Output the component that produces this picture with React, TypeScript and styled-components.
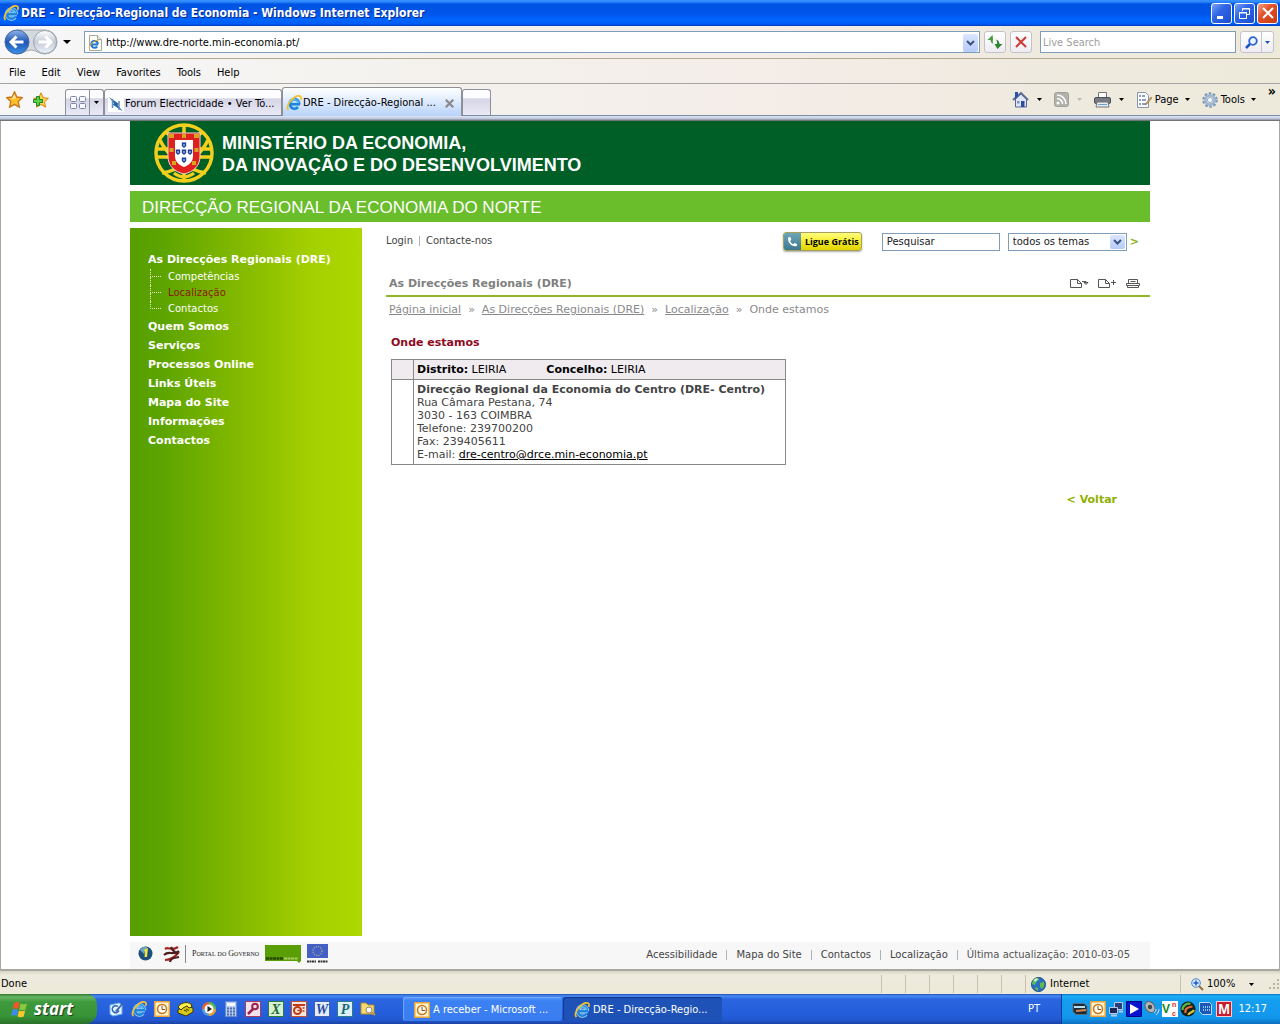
import React from 'react';
import styled, { createGlobalStyle } from 'styled-components';

const ui = '"DejaVu Sans Condensed", Tahoma, sans-serif';
const web = '"DejaVu Sans", Verdana, sans-serif';

const GlobalStyle = createGlobalStyle`
  *, *::before, *::after { box-sizing: border-box; }
  body { margin: 0; background: #fff; font: 11px/14px ${ui}; color: #000; }
  button, input, select { font: inherit; color: inherit; margin: 0; }
  button { padding: 0; border: 0; background: none; white-space: nowrap; }
  ul { list-style: none; margin: 0; padding: 0; }
  h1, h2, h3, p { margin: 0; }
  svg { display: block; flex: none; }
`;

/* ---------- browser window ---------- */

const Window = styled.div`
  min-height: 100vh;
  display: flex;
  flex-direction: column;
`;

const TitleBar = styled.header`
  height: 26px;
  display: flex;
  align-items: center;
  gap: 2px;
  padding: 0 2px 0 3px;
  background: linear-gradient(#3a93ff 0, #2a86ff 2px, #0053e1 4px, #0055ea 14px, #0066ff 20px, #005cf4 24px, #0038c0 26px);
`;

const WindowTitle = styled.h1`
  flex: 1;
  font: bold 12px/16px ${ui};
  color: #fff;
  text-shadow: 1px 1px 0 #0a2a8c;
  white-space: nowrap;
`;

const CaptionButton = styled.button<{ $close?: boolean }>`
  width: 21px;
  height: 21px;
  display: grid;
  place-items: center;
  border: 1px solid #fff;
  border-radius: 3px;
  background: ${p => p.$close
    ? 'linear-gradient(135deg, #f0a080, #e2512a 40%, #c93a10)'
    : 'linear-gradient(135deg, #7ba2f5, #2f66e6 40%, #1d4cd0)'};
`;

const Chrome = styled.div`
  background: linear-gradient(90deg, #f7f7f9, #f4f2ee 30%, #f4ede8 60%, #efeadf 80%, #edeadb);
`;

const NavBar = styled.div`
  height: 33px;
  display: flex;
  align-items: center;
  padding: 0 6px 0 4px;
  border-bottom: 1px solid #b5a98c;
`;

const BackForward = styled.div`
  display: flex;
  align-items: center;
  width: 80px;
  gap: 5px;
`;

const AddressBox = styled.form`
  flex: 1;
  height: 22px;
  display: flex;
  align-items: center;
  gap: 2px;
  padding: 1px 1px 0 2px;
  border: 1px solid #7f9db9;
  background: #fff;
`;

const BareInput = styled.input`
  flex: 1;
  min-width: 0;
  border: 0;
  padding: 1px 1px 0;
  background: transparent;
  outline: none;
  &::placeholder { color: #a0a0a0; opacity: 1; }
`;

const DropButton = styled.button`
  width: 15px;
  height: 18px;
  display: grid;
  place-items: center;
  border-radius: 2px;
  background: linear-gradient(#dbe5fd, #b5cbf9);
`;

const ToolButton = styled.button`
  width: 22px;
  height: 22px;
  margin-left: 4px;
  display: grid;
  place-items: center;
  border: 1px solid #c3c2cb;
  border-radius: 3px;
  background: linear-gradient(#fff, #eeecf2);
`;

const SearchBox = styled.form`
  width: 196px;
  height: 22px;
  margin: 0 4px 0 8px;
  display: flex;
  align-items: center;
  padding: 1px 1px 0;
  border: 1px solid #7f9db9;
  background: #fff;
`;

const SplitButton = styled.div`
  height: 22px;
  display: flex;
  border: 1px solid #c3c2cb;
  border-radius: 3px;
  background: linear-gradient(#fff, #eeecf2);
`;

const SplitPart = styled.button<{ $narrow?: boolean }>`
  width: ${p => (p.$narrow ? 12 : 20)}px;
  display: grid;
  place-items: center;
  border-left: ${p => (p.$narrow ? '1px solid #c3c2cb' : '0')};
`;

const MenuBar = styled.nav`
  height: 25px;
  display: flex;
  align-items: center;
  gap: 16px;
  padding: 3px 9px 0;
  border-bottom: 1px solid #a7a6a0;
`;

const TabRow = styled.div`
  height: 32px;
  display: flex;
  align-items: flex-end;
  padding: 0 2px 0 6px;
  border-bottom: 1px solid #7a8ca8;
`;

const Favourites = styled.div`
  height: 31px;
  width: 59px;
  display: flex;
  align-items: center;
  gap: 10px;
`;

const TabFrame = styled.div<{ $active?: boolean; $width: number }>`
  width: ${p => p.$width}px;
  height: ${p => (p.$active ? 29 : 26)}px;
  margin-bottom: ${p => (p.$active ? -1 : 0)}px;
  display: flex;
  align-items: center;
  gap: 1px;
  padding: 2px 7px 0 3px;
  border: 1px solid #8e9097;
  border-bottom: 0;
  border-radius: 3px 3px 0 0;
  background: ${p => p.$active
    ? 'linear-gradient(#fff, #e3eefe 40%, #b9d3fb)'
    : 'linear-gradient(#fdfdff 30%, #d5d5e6 36%, #eaeaf6)'};
`;

const TabLabel = styled.button`
  flex: 1;
  text-align: left;
`;

const QuickTabs = styled(TabFrame)`
  padding: 0;
  gap: 0;
`;

const QuickPart = styled.button<{ $narrow?: boolean }>`
  flex: ${p => (p.$narrow ? '0 0 14px' : 1)};
  height: 100%;
  display: grid;
  place-items: center;
  border-left: ${p => (p.$narrow ? '1px solid #8e9097' : '0')};
`;

const CommandBar = styled.div`
  flex: 1;
  height: 31px;
  display: flex;
  align-items: center;
  justify-content: flex-end;
  gap: 12px;
  padding-right: 2px;
`;

const Command = styled.button<{ $label?: boolean }>`
  display: flex;
  align-items: center;
  gap: ${p => (p.$label ? 3 : 8)}px;
`;

const Overflow = styled.button`
  align-self: flex-start;
  font: bold 14px/14px ${ui};
`;

const ViewportEdge = styled.div`
  height: 5px;
  background: linear-gradient(#dfe6f2, #b9c3da 3px, #7d8087 4px, #6b6b6b);
`;

/* ---------- web page ---------- */

const Viewport = styled.div`
  flex: 1;
  display: flex;
  border: solid #a9a89f;
  border-width: 0 1px 2px;
  background: #fff;
  font: 11px/13px ${web};
`;

const Site = styled.div`
  flex: 1;
  max-width: 1020px;
  margin: 0 auto;
  display: flex;
  flex-direction: column;
  gap: 6px;
`;

const Ministry = styled.header`
  height: 64px;
  display: flex;
  align-items: center;
  gap: 8px;
  padding-left: 24px;
  background: #005e27;
  color: #fff;
  font: bold 18px/22px "Liberation Sans", Arial, sans-serif;
`;

const MinistryName = styled.div`
  padding-top: 2px;
`;

const Region = styled.h2`
  height: 31px;
  padding: 1px 12px 0;
  background: #6abd2b;
  color: #fff;
  font: 17px/32px "Liberation Sans", Arial, sans-serif;
`;

const Columns = styled.div`
  flex: 1;
  display: flex;
  gap: 24px;
`;

const Sidebar = styled.nav`
  width: 232px;
  padding: 22px 18px;
  background: linear-gradient(90deg, #569f00, #5ba300 12%, #86bb00 50%, #a5d000 78%, #aed800);
  color: #fff;
`;

const MainLink = styled.a`
  color: #fff;
  font-weight: bold;
  line-height: 19px;
  text-decoration: none;
`;

const Branch = styled.li<{ $last?: boolean }>`
  height: 16px;
  margin-left: 2px;
  display: grid;
  grid-template: 8px 8px / 11px auto;
  column-gap: 7px;
  font-size: 10px;
  line-height: 16px;
  &::before {
    content: '';
    border: dotted #e4f0c0;
    border-width: 0 0 1px 1px;
  }
  &::after {
    content: '';
    grid-row: 2;
    grid-column: 1;
    border-left: ${p => (p.$last ? '0' : '1px dotted #e4f0c0')};
  }
`;

const SubLink = styled.a<{ $current?: boolean }>`
  grid-column: 2;
  grid-row: 1 / 3;
  color: ${p => (p.$current ? '#8c1a00' : '#fff')};
  text-decoration: none;
`;

const Main = styled.main`
  flex: 1;
  min-width: 0;
  color: #444;
`;

const TopRow = styled.div`
  height: 27px;
  display: flex;
  align-items: center;
  padding-right: 11px;
  font-size: 10px;
`;

const Account = styled.div`
  flex: 1;
  display: flex;
  gap: 6px;
  align-items: center;
  padding-bottom: 2px;
`;

const PlainLink = styled.a`
  color: #444;
  text-decoration: none;
`;

const Rule = styled.span<{ $tall?: boolean }>`
  width: 1px;
  height: ${p => (p.$tall ? 18 : 10)}px;
  background: ${p => (p.$tall ? '#888' : '#a8b4b8')};
`;

const CallButton = styled.button`
  height: 19px;
  display: flex;
  align-items: center;
  margin-right: 20px;
  border: 1px solid #a5a15a;
  border-radius: 3px;
  overflow: hidden;
  background: linear-gradient(#fffd80, #f4ec2c 50%, #e2d400);
  box-shadow: 0 1px 2px #aaa;
  color: #000;
  font: bold 9px/17px "Open Sans", sans-serif;
`;

const CallIcon = styled.span`
  width: 17px;
  height: 17px;
  margin-right: 2px;
  display: grid;
  place-items: center;
  background: linear-gradient(#6fa5b8, #3d7890);
`;

const CallText = styled.span`
  width: 58px;
  text-align: center;
`;

const SearchField = styled.input`
  width: 118px;
  height: 18px;
  padding: 0 4px;
  border: 1px solid #7f9db9;
  background: #fff;
  &::placeholder { color: #222; opacity: 1; }
`;

const SelectFrame = styled.div`
  width: 119px;
  height: 18px;
  margin: 0 3px 0 8px;
  display: grid;
  grid-template-columns: 1fr 15px;
  align-items: center;
  padding-right: 1px;
  border: 1px solid #7f9db9;
`;

const ThemeSelect = styled.select`
  grid-area: 1 / 1 / 2 / 3;
  height: 16px;
  padding: 0 4px;
  appearance: none;
  border: 0;
  background: transparent;
  color: #222;
`;

const SelectArrow = styled.span`
  grid-area: 1 / 2;
  height: 14px;
  display: grid;
  place-items: center;
  border-radius: 2px;
  background: linear-gradient(#dbe5fd, #b5cbf9);
  pointer-events: none;
`;

const Go = styled.button`
  color: #8fb31a;
  font: bold 11px/14px ${web};
`;

const SectionHead = styled.div`
  height: 42px;
  display: flex;
  align-items: flex-end;
  padding: 0 10px 5px 3px;
  border-bottom: 2px solid #93b32b;
`;

const SectionTitle = styled.h2`
  flex: 1;
  font: bold 11px/13px ${web};
  color: #808080;
`;

const PageTools = styled.div`
  display: flex;
  gap: 9px;
  padding-bottom: 1px;
`;

const Crumbs = styled.nav`
  display: flex;
  gap: 7px;
  padding: 6px 3px;
  color: #8a8a8a;
`;

const CrumbLink = styled.a`
  color: #8a8a8a;
`;

const Article = styled.section`
  padding: 14px 33px 0 5px;
`;

const ArticleTitle = styled.h3`
  font: bold 11px/13px ${web};
  color: #8e0b1e;
`;

const OfficeTable = styled.table`
  width: 395px;
  margin-top: 10px;
  border-collapse: collapse;
`;

const Row = styled.tr<{ $shaded?: boolean }>`
  background: ${p => (p.$shaded ? '#efebef' : '#fff')};
  color: ${p => (p.$shaded ? '#000' : '#444')};
`;

const Cell = styled.td<{ $width?: number }>`
  width: ${p => (p.$width ? `${p.$width}px` : 'auto')};
  padding: 3px;
  border: 1px solid #888;
  text-align: left;
`;

const Pairs = styled.div`
  display: flex;
  gap: 40px;
`;

const MailLink = styled.a`
  color: #000;
`;

const BackRow = styled.p`
  margin-top: 28px;
  text-align: right;
`;

const BackLink = styled.a`
  color: #8fb000;
  font-weight: bold;
  text-decoration: none;
`;

const SiteFooter = styled.footer`
  height: 27px;
  display: flex;
  align-items: center;
  padding: 0 20px 2px 8px;
  background: #f7f7f7;
  color: #555;
  font-size: 10px;
`;

const Logos = styled.div`
  flex: 1;
  display: flex;
  align-items: center;
  gap: 6px;
  padding-bottom: 2px;
`;

const LogoPair = styled.div`
  display: flex;
  align-items: center;
  gap: 10px;
  margin-right: -2px;
`;

const Portal = styled.a`
  color: #222;
  font: small-caps 8px/12px "Liberation Serif", serif;
  text-decoration: none;
  white-space: nowrap;
`;

const FooterLinks = styled.div`
  display: flex;
  align-items: center;
  gap: 9px;
`;

/* ---------- status bar and task bar ---------- */

const StatusBar = styled.footer`
  height: 23px;
  display: flex;
  background: linear-gradient(#d8d5c4, #eeebdf 4px, #ece9d8);
`;

const Pane = styled.div<{ $width?: number }>`
  flex: ${p => (p.$width ? `0 0 ${p.$width}px` : 1)};
  margin: 4px 0 1px;
  padding-left: ${p => (p.$width ? 5 : 1)}px;
  display: flex;
  align-items: center;
  gap: 4px;
  border-left: ${p => (p.$width ? '1px solid #c5c2b0' : '0')};
`;

const ZoomButton = styled.button`
  flex: 1;
  display: flex;
  align-items: center;
  gap: 3px;
  padding-left: 5px;
`;

const Grow = styled.span`
  flex: 1;
`;

const TaskBar = styled.footer`
  height: 30px;
  display: flex;
  align-items: stretch;
  background: linear-gradient(#1f4fb8, #4a8cf4 2px, #2b66e0 5px, #245edb 20px, #2258cf 26px, #1941a5);
  color: #fff;
`;

const StartButton = styled.button`
  width: 97px;
  display: flex;
  align-items: center;
  gap: 5px;
  padding-left: 11px;
  border-radius: 0 10px 12px 0;
  background: linear-gradient(#2f7a2f, #67b565 3px, #3f9a3d 8px, #379437 22px, #2a7029);
  color: #fff;
  font: italic bold 17px/24px "Open Sans", sans-serif;
  text-shadow: 1px 1px 1px #1a3d1a;
`;

const QuickLaunch = styled.div`
  flex: 0 0 306px;
  display: flex;
  align-items: center;
  gap: 7px;
  padding-left: 11px;
`;

const IconButton = styled.button`
  display: block;
`;

const TaskButton = styled.button<{ $active?: boolean }>`
  width: 159px;
  margin: 3px 1px 3px 0;
  display: flex;
  align-items: center;
  gap: 3px;
  padding: 1px 0 0 11px;
  border-radius: 3px;
  color: #fff;
  background: ${p => (p.$active ? '#1e52b7' : 'linear-gradient(#5a9bfb, #3c81f3 4px, #3a7cf0)')};
  box-shadow: inset 1px 1px 1px ${p => (p.$active ? '#123a8c' : '#6ea8ff')};
`;

const Language = styled.button`
  margin-right: 21px;
  color: #fff;
`;

const Tray = styled.div`
  flex: 0 0 219px;
  display: flex;
  align-items: center;
  gap: 2px;
  padding: 0 13px 0 10px;
  border-left: 1px solid #0b3f9e;
  background: linear-gradient(#0f6fd0, #1cb0f5 2px, #149ff0 6px, #1296ec 24px, #0d6fc0);
`;

const Clock = styled.time`
  flex: 1;
  text-align: right;
  color: #fff;
`;

/* ---------- drawings ---------- */

const IE = () => (
  <svg width="16" height="16" viewBox="0 0 16 16" fill="none">
    <path d="M13.200 9.200A4.700 4.700 0 1 0 12 12.200M4.500 9.300h9.500" stroke="#a8dcfa" strokeWidth="4" />
    <path d="M13.200 9.200A4.700 4.700 0 1 0 12 12.200M4.500 9.300h9.500" stroke="#2183dc" strokeWidth="2.600" />
    <path d="M12.600 8A4.300 4.300 0 0 0 5 6.500" stroke="#62c4f6" strokeWidth="1.500" />
    <path d="M2.500 15C-1.500 11.500 9-1.500 14.200 1.300c1.200.8 1 2.200.4 3.600" stroke="#f6c02c" strokeWidth="1.700" />
  </svg>
);

const Arrow = ({ c = '#000' }: { c?: string }) => (
  <svg width="5" height="3" viewBox="0 0 5 3"><path d="M0 0h5L2.500 3z" fill={c} /></svg>
);

const Chevron = () => (
  <svg width="9" height="6" viewBox="0 0 9 6" fill="none"><path d="M1 1l3.500 3.500L8 1" stroke="#3c5482" strokeWidth="2" /></svg>
);

const NavButtons = () => (
  <svg width="54" height="26" viewBox="0 0 54 26">
    <defs>
      <linearGradient id="bk" x2="0" y2="1"><stop stopColor="#8eb4e8" /><stop offset=".5" stopColor="#1f56b5" /><stop offset="1" stopColor="#3c93e8" /></linearGradient>
      <linearGradient id="fw" x2="0" y2="1"><stop stopColor="#fff" /><stop offset=".5" stopColor="#c4ccd8" /><stop offset="1" stopColor="#eef2f8" /></linearGradient>
    </defs>
    <path d="M13 1h28a12 12 0 0 1 0 24c-6 0-9-4-14-4s-8 4-14 4z" fill="#d4d8df" stroke="#a4a9b1" />
    <circle cx="13" cy="13" r="12" fill="url(#bk)" stroke="#44669c" />
    <circle cx="41" cy="13" r="11.500" fill="url(#fw)" stroke="#9aa3ae" />
    <path d="M19.500 13H8M12.500 7.500L7 13l5.500 5.500" fill="none" stroke="#fff" strokeWidth="3" />
    <path d="M34.500 13H46M41.500 7.500L47 13l-5.500 5.500" fill="none" stroke="#fff" strokeWidth="3" />
  </svg>
);

const PageIE = () => (
  <svg width="16" height="16" viewBox="0 0 16 16">
    <path d="M2.500.5h8l4 4v11h-12z" fill="#fdfdf8" stroke="#a9a997" />
    <path d="M10.500.5v4h4" fill="#e8e6d8" stroke="#a9a997" />
    <path d="M11 9.500H4.500M11 9.300A3.400 3.400 0 1 0 10.200 11.500" fill="none" stroke="#2474d4" strokeWidth="2" />
    <path d="M2.500 13.500C1 11 8 4 11.500 5.500" fill="none" stroke="#f0b020" />
  </svg>
);

const Refresh = () => (
  <svg width="16" height="14" viewBox="0 0 16 14">
    <path d="M5.500 0L.5 5h3c.2 2 1 3.300 3 3.800C5.500 7.500 5.600 6 6 5V3.500z" fill="#4a9a40" />
    <path d="M10.500 14l5-5h-3c-.2-2-1-3.800-3.500-4.500 1 1.500 1.400 3 1 4.500H7.500z" fill="#2b852a" />
  </svg>
);

const Cross = ({ c, s = 12, w = 2 }: { c: string; s?: number; w?: number }) => (
  <svg width={s} height={s} viewBox="0 0 12 12"><path d="M1 1l10 10M11 1L1 11" stroke={c} strokeWidth={w} /></svg>
);

const Magnifier = ({ plus }: { plus?: boolean }) => (
  <svg width="13" height="13" viewBox="0 0 13 13" fill="none">
    {plus ? (
      <>
        <path d="M8 8l4 4" stroke="#9b6a3a" strokeWidth="2" />
        <circle cx="5" cy="5" r="4.300" fill="#d8eaff" stroke="#4a80c8" />
        <path d="M5 2.500v5M2.500 5h5" stroke="#1c5cc8" strokeWidth="1.500" />
      </>
    ) : (
      <>
        <path d="M5 8l-4 4" stroke="#1c4fc0" strokeWidth="2.500" />
        <circle cx="8" cy="5" r="3.800" fill="#eef5ff" stroke="#2a63d8" strokeWidth="1.800" />
      </>
    )}
  </svg>
);

const starPath = 'M8 .8l2.200 4.900 5.200.600-3.900 3.600 1.100 5.300L8 12.500l-4.600 2.700 1.100-5.300L.6 6.300l5.200-.6z';

const Star = () => (
  <svg width="17" height="17" viewBox="0 0 16 16"><path d={starPath} fill="#ffc02c" stroke="#c8781c" strokeWidth="1.300" /><path d="M8 3l1.300 3.500L5 8z" fill="#ffe9a0" /></svg>
);

const StarPlus = () => (
  <svg width="16" height="16" viewBox="0 0 16 16">
    <path d={starPath} fill="#ffd34a" stroke="#d98416" />
    <path d="M3.500 4.500h3v3h3v3h-3v3h-3v-3h-3v-3h3z" fill="#5fd04a" stroke="#1c8420" />
  </svg>
);

const Grid4 = () => (
  <svg width="16" height="13" viewBox="0 0 16 13" fill="#f8f8ff" stroke="#7d86a0">
    <rect x=".5" y=".5" width="6" height="5" rx="1" /><rect x="9.500" y=".5" width="6" height="5" rx="1" />
    <rect x=".5" y="7.500" width="6" height="5" rx="1" /><rect x="9.500" y="7.500" width="6" height="5" rx="1" />
  </svg>
);

const ForumIcon = () => (
  <svg width="16" height="16" viewBox="0 0 16 16">
    <rect width="16" height="16" fill="#fff" />
    <path d="M1 1l10 7-1.500 1 5.500 6.500L4.500 8.500l1.500-1z" fill="#2a64a0" />
    <path d="M4.500 3v9M11 5v9" stroke="#5a90c4" strokeWidth="1.500" />
  </svg>
);

const Home = () => (
  <svg width="17" height="17" viewBox="0 0 17 17">
    <path d="M3.500 8v8h11V8L9 3z" fill="#dfe6f5" stroke="#56688f" />
    <path d="M1 9l8-7 7 7" fill="none" stroke="#5a6c98" strokeWidth="2" />
    <path d="M3 1h3v4L3 8z" fill="#2c4fa8" />
    <rect x="9" y="10" width="3.500" height="6" fill="#2f4ca0" /><rect x="5" y="10" width="2.500" height="2.500" fill="#7a92c8" />
  </svg>
);

const Feed = () => (
  <svg width="15" height="15" viewBox="0 0 15 15">
    <rect x=".5" y=".5" width="14" height="14" rx="2" fill="#b2b2ac" stroke="#a0a09a" />
    <circle cx="4" cy="11" r="1.500" fill="#fff" />
    <path d="M3 6.500a5.500 5.500 0 0 1 5.500 5.500M3 3a9 9 0 0 1 9 9" fill="none" stroke="#fff" strokeWidth="1.500" />
  </svg>
);

const Printer = () => (
  <svg width="17" height="16" viewBox="0 0 17 16">
    <path d="M4.500.5h8v6h-8z" fill="#fff" stroke="#777" />
    <rect x=".5" y="5.500" width="16" height="6" rx="1.500" fill="#777a80" stroke="#4d5056" />
    <path d="M3 10h11l1 5H2z" fill="#e8ecf4" stroke="#777" /><path d="M4 12.500h9" stroke="#6b9fd0" />
  </svg>
);

const PageIcon = () => (
  <svg width="16" height="16" viewBox="0 0 16 16">
    <path d="M1.500.5h8l3 3v12h-11z" fill="#fbfcff" stroke="#8c96aa" />
    <path d="M3 4h2M6 4h3M3 8h2M6 8h4M3 12h2M6 12h4" stroke="#6c80b0" strokeWidth="1.500" />
    <path d="M15 5l-5 6-1 2 2-1 5-6z" fill="#c8a860" stroke="#806830" strokeWidth=".5" />
  </svg>
);

const Gear = () => (
  <svg width="16" height="16" viewBox="0 0 16 16" fill="none">
    <circle cx="8" cy="8" r="6.500" stroke="#7c97b8" strokeWidth="2.500" strokeDasharray="2.500 1.580" />
    <circle cx="8" cy="8" r="4.600" stroke="#9fb6d0" strokeWidth="2.800" />
    <circle cx="8" cy="8" r="2.600" fill="#f2f5f9" stroke="#6c86a8" strokeWidth=".6" />
  </svg>
);

const quinas = [[30, 22], [30, 29], [30, 37], [24, 29], [36, 29]];

const Arms = () => (
  <svg width="60" height="60" viewBox="0 0 60 60">
    <g fill="none" stroke="#f2cf1d" strokeWidth="3.500">
      <circle cx="30" cy="30" r="28" />
      <path d="M30 1v58M3 26h54M3 34h54M6 17c6 14 26 30 46 33M54 17C48 31 28 47 8 50M11 9l10 6M49 9l-10 6M20 50c6 5 14 5 20 0" />
    </g>
    <path d="M14 10h32v23c0 10-6 15.500-16 18-10-2.500-16-8-16-18z" fill="#e01f1f" stroke="#f4d8d0" strokeWidth="1" />
    <path d="M21 17h18v16c0 6-4 9-9 11-5-2-9-5-9-11z" fill="#fff" />
    <path d="M15 11h5v4h-5zM28 11h4v4h-4zM40 11h5v4h-5zM15.500 25h4v4h-4zM40.500 25h4v4h-4zM18 38h4v4h-4zM38 38h4v4h-4z" fill="#d9a51c" />
    {quinas.map(([x, y]) => (
      <g key={`${x}-${y}`}>
        <path d={`M${x - 2.2} ${y - 2.5}h4.400v3.500L${x} ${y + 3}l-2.200-2z`} fill="#1c3f9c" />
        <circle cx={x} cy={y} r=".8" fill="#fff" />
      </g>
    ))}
  </svg>
);

const Phone = () => (
  <svg width="12" height="12" viewBox="0 0 12 12">
    <path d="M2.500 1l2 .2.800 2.600-1.200 1.100c.5 1.500 1.600 2.600 3.200 3.200l1.200-1.100 2.500 1-.2 2C6 11.500.5 6 2.500 1z" fill="#fff" />
  </svg>
);

const SheetTool = ({ d }: { d: string }) => (
  <svg width="19" height="11" viewBox="0 0 19 11" fill="none" stroke="#555">
    <path d="M.5 1.500h7l4 4v4H.5zM7.500 1.500v4h4" /><path d={d} />
  </svg>
);

const PrintTool = () => (
  <svg width="14" height="11" viewBox="0 0 14 11" fill="none" stroke="#555">
    <path d="M2.500 5V1.500h9V5M4.500 3.500h5M.5 5.500h13v2H.5zM1.500 7.500v2h11v-2" />
  </svg>
);

const InfoLogo = () => (
  <svg width="15" height="15" viewBox="0 0 15 15">
    <circle cx="7.500" cy="7.500" r="7" fill="#1c4f7c" /><path d="M2 4a7 7 0 0 1 7-3L6 8z" fill="#6aa5c8" />
    <path d="M7 3l3-1-1 9H6.500l.5-6H6z" fill="#f4e23c" />
  </svg>
);

const GovLogo = () => (
  <svg width="18" height="18" viewBox="0 0 18 18" fill="none" strokeWidth="2.200">
    <path d="M2 4c4-3 6 3 13-2M2 15c5 0 10-3 14-8" stroke="#a82424" />
    <path d="M1 10c5-5 9 1 15-4M7 17c1-5 5-4 9-5M8 2c2 5 3 4 7 7" stroke="#4a2020" />
  </svg>
);

const GreenLogo = () => (
  <svg width="36" height="18" viewBox="0 0 36 18">
    <path d="M0 0h36v16l-2 2-2-2H0z" fill="#5a9e06" /><path d="M1 13.500h17" stroke="#234a00" strokeWidth="2.500" strokeDasharray="3 .5" /><path d="M19 13.500h14" stroke="#a7cc60" strokeWidth="2" strokeDasharray="3 .5" />
  </svg>
);

const EuLogo = () => (
  <svg width="22" height="20" viewBox="0 0 22 20">
    <rect width="21" height="14" fill="#4560c4" />
    <circle cx="10.500" cy="7" r="4.500" fill="none" stroke="#a8b09c" strokeWidth="1.200" strokeDasharray="1.200 1.150" />
    <path d="M0 17.500h9M11 17.500h10" stroke="#333" strokeWidth="2" strokeDasharray="2 .5" />
  </svg>
);

const Globe = () => (
  <svg width="15" height="15" viewBox="0 0 15 15">
    <circle cx="7.500" cy="7.500" r="7" fill="#2b6fc4" stroke="#1c4a80" />
    <path d="M2 3c3-3 6-2 6 0L5 5 4 8 1 7zM9 6l4-1c1 2 0 5-2 7l-2-2zM5 10l2 1v3L4 12z" fill="#5cc04a" />
    <path d="M3 3c1-1 3-2 4-1L4 5z" fill="#dff2ff" />
  </svg>
);

const Grip = () => (
  <svg width="12" height="12" viewBox="0 0 12 12" fill="#b8b4a2">
    <path d="M9 1h2v2H9zM5 5h2v2H5zM9 5h2v2H9zM1 9h2v2H1zM5 9h2v2H5zM9 9h2v2H9z" />
  </svg>
);

const Flag = () => (
  <svg width="18" height="17" viewBox="0 0 18 17">
    <path d="M3 2c2-1.500 4-1 5.500 0L7.200 8C5.500 7 4 7 1.800 8z" fill="#f0562a" />
    <path d="M9.500 2.500c2 1 4 1 6.500 0l-1.500 6c-2 1-4 1-6.200 0z" fill="#8cc83c" />
    <path d="M1.500 9c2-1 4-1 5.500 0l-1.300 6C4 14 2.500 14 .2 15z" fill="#3f8cf0" />
    <path d="M8 9.500c2 1 4 1 6.200 0l-1.500 6c-2 1-4 1-6.200 0z" fill="#fcc82c" />
  </svg>
);

const Tile = ({ c, bg, t, f = '#fff' }: { c: string; bg: string; t: string; f?: string }) => (
  <svg width="16" height="16" viewBox="0 0 16 16">
    <rect x=".5" y=".5" width="15" height="15" fill={bg} stroke={c} />
    <text x="8" y="13" textAnchor="middle" fontFamily="Liberation Serif" fontSize="14" fontWeight="bold" fontStyle="italic" fill={f}>{t}</text>
  </svg>
);

const OutlookIcon = () => (
  <svg width="16" height="16" viewBox="0 0 16 16">
    <rect x=".5" y=".5" width="15" height="15" fill="#fff3d0" stroke="#e8a23c" strokeWidth="2" />
    <circle cx="8" cy="8" r="4.500" fill="#fffdf2" stroke="#c8781c" strokeWidth="1.500" /><path d="M8 5v3.500h3" fill="none" stroke="#8c5010" />
  </svg>
);

const DesktopIcon = () => (
  <svg width="16" height="16" viewBox="0 0 16 16">
    <path d="M2 4l9-2 3 2v9l-9 2-3-2z" fill="#e8f3ff" stroke="#6ab0e8" />
    <path d="M11 9.500a3.500 3.500 0 1 1-1-4" fill="none" stroke="#2b68b8" strokeWidth="1.500" /><path d="M7 10l7-8 1 1-6 8z" fill="#3a64a8" />
  </svg>
);

const DialIcon = () => (
  <svg width="17" height="16" viewBox="0 0 17 16">
    <path d="M1 9l7-5 8 3v4l-7 4-8-3z" fill="#d8c818" stroke="#3c3600" /><path d="M1 6c2-4 9-6 13-3l1 3-3 1-2-2-4 2-2 2z" fill="#fff04a" stroke="#3c3600" />
    <path d="M7 9l3 1.500M9 8l3 1.500" stroke="#3c3600" />
  </svg>
);

const MediaIcon = () => (
  <svg width="16" height="16" viewBox="0 0 16 16">
    <circle cx="8" cy="8" r="7" fill="#5a9be0" /><path d="M8 1a7 7 0 0 1 7 7H8z" fill="#58b84a" /><path d="M15 8a7 7 0 0 1-7 7V8z" fill="#f0a024" /><path d="M1 8a7 7 0 0 1 7-7v7z" fill="#e86028" />
    <circle cx="8" cy="8" r="4.500" fill="#fff" /><path d="M6.500 5l4.500 3-4.500 3z" fill="#222" />
  </svg>
);

const CalcIcon = () => (
  <svg width="14" height="16" viewBox="0 0 14 16">
    <rect x="1.500" y=".5" width="11" height="15" fill="#b8cdf0" stroke="#6a8cc8" /><rect x="3" y="2" width="8" height="3" fill="#f4f9ff" />
    <path d="M3 7.500h8M3 10.500h8M3 13.500h8" stroke="#4a6cb0" strokeWidth="2" strokeDasharray="2 1" />
  </svg>
);

const FolderIcon = () => (
  <svg width="16" height="16" viewBox="0 0 16 16">
    <path d="M1 2h5l2 2h6v9H1z" fill="#f8d870" stroke="#b88c24" /><circle cx="9" cy="9" r="3" fill="#f4f9ff" stroke="#8c8c6c" /><path d="M11 11l4 3" stroke="#c89c34" strokeWidth="2" />
  </svg>
);

const KeyIcon = () => (
  <svg width="16" height="16" viewBox="0 0 16 16">
    <rect x=".5" y=".5" width="15" height="15" fill="#f6e0ea" stroke="#a83c64" /><circle cx="10" cy="5.500" r="2.800" fill="none" stroke="#98244c" strokeWidth="2" /><path d="M8 8l-5 5" stroke="#98244c" strokeWidth="2.500" />
  </svg>
);

const SlideIcon = () => (
  <svg width="16" height="16" viewBox="0 0 16 16">
    <rect x=".5" y=".5" width="15" height="15" fill="#fbe6dc" stroke="#c8502c" /><path d="M2 4h12" stroke="#c03c18" strokeWidth="2" />
    <circle cx="6.500" cy="9.500" r="3.500" fill="none" stroke="#c03c18" strokeWidth="2" /><path d="M11.500 7h2M11.500 10h2M6.500 9.500h3" stroke="#c03c18" strokeWidth="1.500" />
  </svg>
);

const CardIcon = () => (
  <svg width="16" height="14" viewBox="0 0 16 14"><path d="M1 1.500h11l3 3v8H4l-3-3z" fill="#1d2b34" stroke="#5a6c7c" /><path d="M2 5h11" stroke="#b8e0f0" strokeWidth="2" /><path d="M4 9l10-1" stroke="#d88850" strokeWidth="2" /></svg>
);

const NetIcon = () => (
  <svg width="16" height="16" viewBox="0 0 16 16" stroke="#b8c8e8"><path d="M6.500 1.500h8v7h-8z" fill="#2b3c78" /><path d="M1.500 6.500h8v6h-8z" fill="#1c2858" /><path d="M3 14.500h6M11 10.500h4" strokeWidth="2" /></svg>
);

const PlayIcon = () => (
  <svg width="16" height="16" viewBox="0 0 16 16"><path d="M.5.5h15v15H.5z" fill="#0a14d0" stroke="#000a80" /><path d="M4 3l9 5-9 5z" fill="#fff" /></svg>
);

const SpeakerIcon = () => (
  <svg width="16" height="16" viewBox="0 0 16 16"><ellipse cx="6" cy="6" rx="4.500" ry="6" transform="rotate(-35 6 6)" fill="#b4b8bc" stroke="#5c6268" /><circle cx="6" cy="6" r="2.200" fill="#444" /><path d="M10 12c1-1 2-2 2-4M12 14c2-2 3-4 3-6" fill="none" stroke="#d8e8f8" /></svg>
);

const VncIcon = () => (
  <svg width="16" height="16" viewBox="0 0 16 16" fontFamily="Liberation Sans" fontWeight="bold"><path d="M0 0h16v16H0z" fill="#fff" />
    <text x="0" y="12" fontSize="12" fill="#128a20">V</text>
    <text x="10" y="6" fontSize="7" fill="#d83020">n</text>
    <text x="10" y="15" fontSize="7" fill="#d83020">c</text>
  </svg>
);

const SwirlIcon = () => (
  <svg width="16" height="16" viewBox="0 0 16 16" fill="none" strokeWidth="2.200">
    <circle cx="8" cy="8" r="7.500" fill="#162018" />
    <path d="M2.500 9c0-5 5-7 8-6" stroke="#58b848" /><path d="M5.500 12c-1-5 3-6 7-6.500" stroke="#e86c38" /><path d="M8.500 14c0-3 4-2 5.500-5" stroke="#d8c840" />
  </svg>
);

const ChipIcon = () => (
  <svg width="16" height="16" viewBox="0 0 16 16"><path d="M1.500 1.500h10l2 2v10h-9l-3-3z" fill="#1c58b8" stroke="#b8d8f8" /><path d="M5 6h7M5 9h7" stroke="#8cc0ff" strokeDasharray="1 1" strokeWidth="2" /></svg>
);

const MIcon = () => (
  <svg width="16" height="16" viewBox="0 0 16 16"><path d="M.5.5h15v15H.5z" fill="#c81c2c" stroke="#f0d0d4" />
    <text x="8" y="13" textAnchor="middle" fontFamily="Liberation Sans" fontSize="14" fontWeight="bold" fill="#fff">M</text>
  </svg>
);

/* ---------- page data ---------- */

const menus = ['File', 'Edit', 'View', 'Favorites', 'Tools', 'Help'];
const sections = ['Quem Somos', 'Serviços', 'Processos Online', 'Links Úteis', 'Mapa do Site', 'Informações', 'Contactos'];
const branches = ['Competências', 'Localização', 'Contactos'];
const crumbs = ['Página inicial', 'As Direcções Regionais (DRE)', 'Localização'];
const footerItems = ['Acessibilidade', 'Mapa do Site', 'Contactos', 'Localização'];
const launchers: [string, React.ReactNode][] = [
  ['Show desktop', <DesktopIcon />], ['Internet Explorer', <IE />], ['Outlook', <OutlookIcon />], ['Dialer', <DialIcon />],
  ['Media Player', <MediaIcon />], ['Calculator', <CalcIcon />], ['Access', <KeyIcon />],
  ['Excel', <Tile c="#2c7a3c" bg="#d8f0d8" t="X" f="#1c6c2c" />], ['PowerPoint', <SlideIcon />],
  ['Word', <Tile c="#3c62b0" bg="#e4ecfc" t="W" f="#2448a0" />], ['Publisher', <Tile c="#2c7c8c" bg="#dcf2f2" t="P" f="#186878" />],
  ['Search files', <FolderIcon />],
];
const tray = [CardIcon, OutlookIcon, NetIcon, PlayIcon, SpeakerIcon, VncIcon, SwirlIcon, ChipIcon, MIcon];

export default function App() {
  return (
    <Window>
      <GlobalStyle />
      <TitleBar>
        <IE />
        <WindowTitle>DRE - Direcção-Regional de Economia - Windows Internet Explorer</WindowTitle>
        <CaptionButton aria-label="Minimize"><svg width="13" height="13"><path d="M2 9h6v3H2z" fill="#fff" /></svg></CaptionButton>
        <CaptionButton aria-label="Restore">
          <svg width="13" height="13" fill="none" stroke="#fff"><path d="M4.500 4V1.500h7v6H9M4 2h8M1.500 5.500h7v6h-7zM1 6h8" /></svg>
        </CaptionButton>
        <CaptionButton aria-label="Close" $close><Cross c="#fff" /></CaptionButton>
      </TitleBar>

      <Chrome>
        <NavBar>
          <BackForward>
            <IconButton aria-label="Back and forward"><NavButtons /></IconButton>
            <IconButton aria-label="Recent pages"><svg width="8" height="4"><path d="M0 0h8L4 4z" /></svg></IconButton>
          </BackForward>
          <AddressBox>
            <PageIE />
            <BareInput aria-label="Address" defaultValue="http://www.dre-norte.min-economia.pt/" />
            <DropButton type="button" aria-label="Show addresses"><Chevron /></DropButton>
          </AddressBox>
          <ToolButton aria-label="Refresh"><Refresh /></ToolButton>
          <ToolButton aria-label="Stop"><Cross c="#cc3b33" /></ToolButton>
          <SearchBox><BareInput aria-label="Live Search" placeholder="Live Search" /></SearchBox>
          <SplitButton>
            <SplitPart aria-label="Search"><Magnifier /></SplitPart>
            <SplitPart aria-label="Search options" $narrow><Arrow c="#1c4fc0" /></SplitPart>
          </SplitButton>
        </NavBar>

        <MenuBar>{menus.map(m => <button key={m}>{m}</button>)}</MenuBar>

        <TabRow>
          <Favourites>
            <IconButton aria-label="Favorites"><Star /></IconButton>
            <IconButton aria-label="Add to favorites"><StarPlus /></IconButton>
          </Favourites>
          <QuickTabs $width={39}>
            <QuickPart aria-label="Quick tabs"><Grid4 /></QuickPart>
            <QuickPart aria-label="Tab list" $narrow><Arrow /></QuickPart>
          </QuickTabs>
          <TabFrame $width={178}><ForumIcon /><TabLabel>Forum Electricidade • Ver Tó...</TabLabel></TabFrame>
          <TabFrame $width={180} $active>
            <IE />
            <TabLabel>DRE - Direcção-Regional ...</TabLabel>
            <IconButton aria-label="Close tab"><Cross c="#8a8a8a" s={9} w={3} /></IconButton>
          </TabFrame>
          <TabFrame $width={29} />
          <CommandBar>
            <Command aria-label="Home"><Home /><Arrow /></Command>
            <Command aria-label="Feeds"><Feed /><Arrow c="#bbb" /></Command>
            <Command aria-label="Print"><Printer /><Arrow /></Command>
            <Command $label><PageIcon />Page<Grow /><Arrow /></Command>
            <Command $label><Gear />Tools<Grow /><Arrow /></Command>
            <Overflow aria-label="More commands">»</Overflow>
          </CommandBar>
        </TabRow>
        <ViewportEdge />
      </Chrome>

      <Viewport>
        <Site>
          <Ministry>
            <Arms />
            <MinistryName>MINISTÉRIO DA ECONOMIA,<br />DA INOVAÇÃO E DO DESENVOLVIMENTO</MinistryName>
          </Ministry>
          <Region>DIRECÇÃO REGIONAL DA ECONOMIA DO NORTE</Region>
          <Columns>
            <Sidebar>
              <ul>
                <li>
                  <MainLink href="#dre">As Direcções Regionais (DRE)</MainLink>
                  <ul>
                    {branches.map((b, i) => (
                      <Branch key={b} $last={i === branches.length - 1}>
                        <SubLink href="#dre" $current={i === 1}>{b}</SubLink>
                      </Branch>
                    ))}
                  </ul>
                </li>
                {sections.map(s => <li key={s}><MainLink href="#menu">{s}</MainLink></li>)}
              </ul>
            </Sidebar>
            <Main>
              <TopRow>
                <Account>
                  <PlainLink href="#login">Login</PlainLink><Rule /><PlainLink href="#contact">Contacte-nos</PlainLink>
                </Account>
                <CallButton><CallIcon><Phone /></CallIcon><CallText>Ligue Grátis</CallText></CallButton>
                <SearchField aria-label="Pesquisar" placeholder="Pesquisar" />
                <SelectFrame>
                  <ThemeSelect aria-label="Temas"><option>todos os temas</option></ThemeSelect>
                  <SelectArrow><Chevron /></SelectArrow>
                </SelectFrame>
                <Go aria-label="Procurar">&gt;</Go>
              </TopRow>
              <SectionHead>
                <SectionTitle>As Direcções Regionais (DRE)</SectionTitle>
                <PageTools>
                  <IconButton aria-label="Enviar"><SheetTool d="M12 3.500h4v2M14 4.500h4l-2 2z" /></IconButton>
                  <IconButton aria-label="Adicionar"><SheetTool d="M15.500 2v5M13 4.500h5" /></IconButton>
                  <IconButton aria-label="Imprimir"><PrintTool /></IconButton>
                </PageTools>
              </SectionHead>
              <Crumbs>
                {crumbs.map(c => <React.Fragment key={c}><CrumbLink href="#crumb">{c}</CrumbLink><span>»</span></React.Fragment>)}
                <span>Onde estamos</span>
              </Crumbs>
              <Article>
                <ArticleTitle>Onde estamos</ArticleTitle>
                <OfficeTable>
                  <tbody>
                    <Row $shaded>
                      <Cell $width={22} />
                      <Cell>
                        <Pairs><span><b>Distrito:</b> LEIRIA</span><span><b>Concelho:</b> LEIRIA</span></Pairs>
                      </Cell>
                    </Row>
                    <Row>
                      <Cell />
                      <Cell>
                        <b>Direcção Regional da Economia do Centro (DRE- Centro)</b><br />
                        Rua Câmara Pestana, 74<br />
                        3030 - 163 COIMBRA<br />
                        Telefone: 239700200<br />
                        Fax: 239405611<br />
                        E-mail: <MailLink href="mailto:dre-centro@drce.min-economia.pt">dre-centro@drce.min-economia.pt</MailLink>
                      </Cell>
                    </Row>
                  </tbody>
                </OfficeTable>
                <BackRow><BackLink href="#back">&lt; Voltar</BackLink></BackRow>
              </Article>
            </Main>
          </Columns>
          <SiteFooter>
            <Logos>
              <LogoPair><InfoLogo /><GovLogo /></LogoPair>
              <Rule $tall /><Portal href="#portal">Portal do Governo</Portal><GreenLogo /><EuLogo />
            </Logos>
            <FooterLinks>
              {footerItems.map(f => <React.Fragment key={f}><PlainLink href="#footer">{f}</PlainLink><Rule /></React.Fragment>)}
              <span>Última actualização: 2010-03-05</span>
            </FooterLinks>
          </SiteFooter>
        </Site>
      </Viewport>

      <StatusBar>
        <Pane>Done</Pane>
        {[1, 2, 3, 4, 5, 6].map(n => <Pane key={n} $width={24} />)}
        <Pane $width={155}><Globe />Internet</Pane>
        <Pane $width={100}>
          <ZoomButton><Magnifier plus />100%<Grow /><Arrow /><Grow /></ZoomButton>
          <Grip />
        </Pane>
      </StatusBar>

      <TaskBar>
        <StartButton><Flag />start</StartButton>
        <QuickLaunch>{launchers.map(([name, icon]) => <IconButton key={name} aria-label={name}>{icon}</IconButton>)}</QuickLaunch>
        <TaskButton><OutlookIcon />A receber - Microsoft ...</TaskButton>
        <TaskButton $active><IE />DRE - Direcção-Regio...</TaskButton>
        <Grow />
        <Language>PT</Language>
        <Tray>
          {tray.map((Icon, i) => <Icon key={i} />)}
          <Clock>12:17</Clock>
        </Tray>
      </TaskBar>
    </Window>
  );
}
